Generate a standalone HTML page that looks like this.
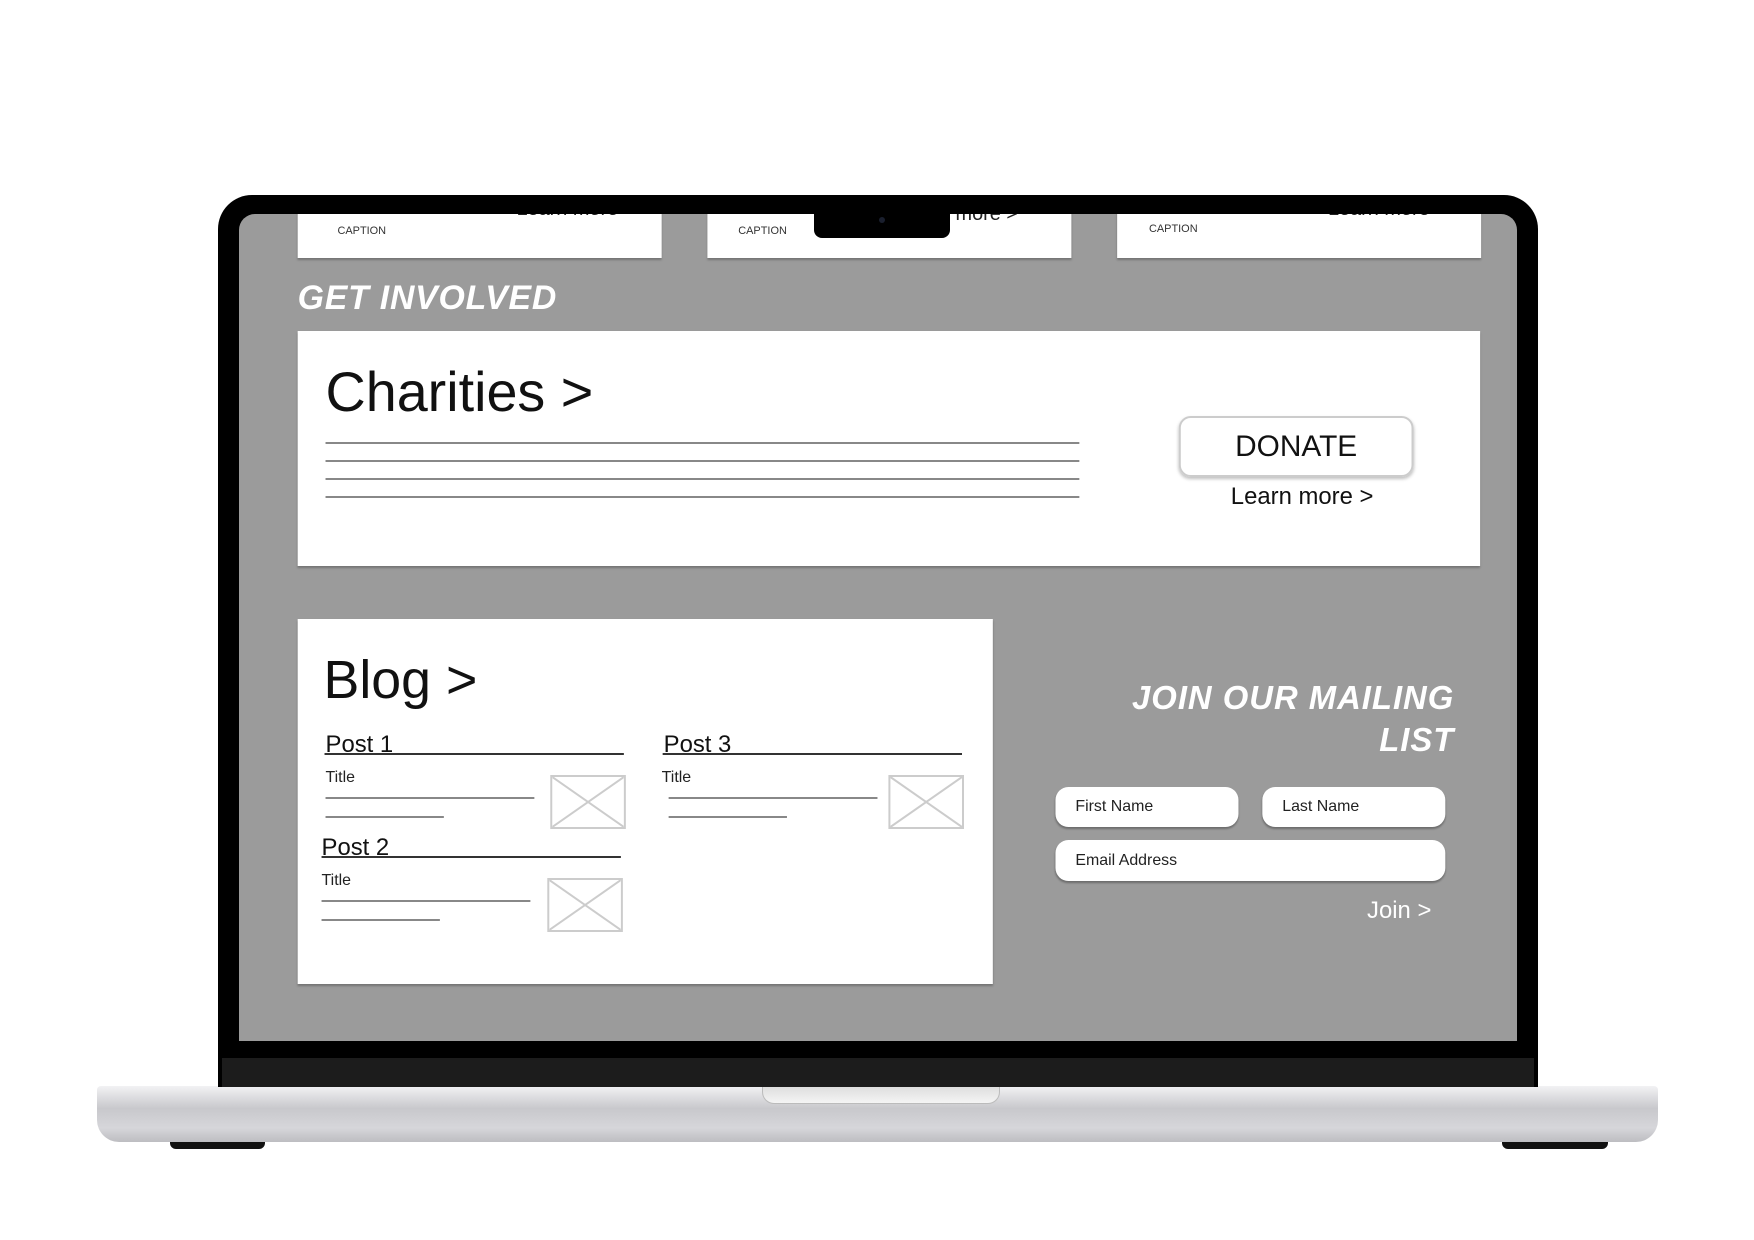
<!DOCTYPE html>
<html><head><meta charset="utf-8"><style>
*{margin:0;padding:0;box-sizing:border-box}
body{width:1754px;height:1240px;background:#fff;position:relative;overflow:hidden;font-family:"Liberation Sans",sans-serif}
.a{position:absolute}
.card{position:absolute;background:#fff;box-shadow:0 2px 2px rgba(0,0,0,.25)}
.ln{position:absolute;height:2px;background:#888}
.dk{position:absolute;height:2px;background:#333}
.img{position:absolute;border:2px solid #ccc;overflow:hidden}
.inp{position:absolute;background:#fff;border-radius:13px;font-size:16px;color:#222;padding-left:20px;display:flex;align-items:center;box-shadow:0 2px 2px rgba(0,0,0,.3)}
</style></head><body>
<!-- base -->
<div class="a" style="left:170px;top:1135px;width:95px;height:14px;background:#111;border-radius:0 0 6px 6px"></div>
<div class="a" style="left:1502px;top:1135px;width:106px;height:14px;background:#111;border-radius:0 0 6px 6px"></div>
<div class="a" style="left:97px;top:1086px;width:1561px;height:56px;border-radius:4px 4px 22px 22px;background:linear-gradient(#f2f2f4,#c8c8cc 40%,#d6d6da 75%,#bdbdc1)"></div>
<div class="a" style="left:762px;top:1086px;width:238px;height:18px;border-radius:0 0 12px 12px;background:linear-gradient(#ddd,#f4f4f4);border:1px solid #bbb;border-top:none"></div>
<!-- bezel -->
<div class="a" style="left:218px;top:195px;height:892px;background:#000;border-radius:34px 34px 0 0;width:1320px"></div>
<div class="a" style="left:222px;top:1058px;width:1312px;height:29px;background:#1c1c1c"></div>
<!-- screen -->
<div class="a" style="left:239px;top:214px;width:1278px;height:827px;background:#9b9b9b;border-radius:16px 16px 0 0"></div>
<div class="a" style="left:239px;top:214px;width:1278px;height:827px;overflow:hidden">
<div class="a" style="left:0;top:-3px;width:1285px;height:832px;transform:scaleX(0.9945);transform-origin:0 0">
 <div class="card" style="left:59px;top:-17px;width:366px;height:64px"><div class="a" style="left:40px;top:31px;font-size:11px;color:#333">CAPTION</div><div class="a" style="left:220px;top:4px;font-size:20px;color:#222">Learn more &gt;</div></div>
 <div class="card" style="left:471px;top:-17px;width:366px;height:64px"><div class="a" style="left:31px;top:31px;font-size:11px;color:#333">CAPTION</div><div class="a" style="left:215px;top:9px;font-size:20px;color:#222">arn more &gt;</div></div>
 <div class="card" style="left:883px;top:-17px;width:366px;height:64px"><div class="a" style="left:32px;top:29px;font-size:11px;color:#333">CAPTION</div><div class="a" style="left:212px;top:4px;font-size:20px;color:#222">Learn more &gt;</div></div>
 <div class="a" style="left:59px;top:68px;font-size:34px;font-weight:bold;font-style:italic;color:#fff;letter-spacing:0.8px">GET INVOLVED</div>
 <!-- charities -->
 <div class="card" style="left:59px;top:120px;width:1189px;height:235px">
  <div class="a" style="left:28px;top:28px;font-size:56px;color:#111">Charities &gt;</div>
  <div class="ln" style="left:28px;top:111px;width:758px"></div>
  <div class="ln" style="left:28px;top:129px;width:758px"></div>
  <div class="ln" style="left:28px;top:147px;width:758px"></div>
  <div class="ln" style="left:28px;top:165px;width:758px"></div>
  <div class="a" style="left:886px;top:85px;width:236px;height:61px;border:2px solid #ccc;border-radius:12px;box-shadow:0 2px 3px rgba(0,0,0,.25);display:flex;align-items:center;justify-content:center;font-size:30px;color:#111">DONATE</div>
  <div class="a" style="left:880px;top:152px;width:260px;text-align:center;font-size:24px;color:#111">Learn more &gt;</div>
 </div>
 <!-- blog -->
 <div class="card" style="left:59px;top:408px;width:699px;height:365px">
  <div class="a" style="left:26px;top:30px;font-size:54px;color:#111">Blog &gt;</div>
  <div class="a" style="left:28px;top:112px;font-size:24px;color:#111">Post 1</div>
  <div class="dk" style="left:27px;top:134px;width:301px"></div>
  <div class="a" style="left:28px;top:150px;font-size:16px;color:#222">Title</div>
  <div class="ln" style="left:28px;top:178px;width:210px"></div>
  <div class="ln" style="left:28px;top:197px;width:119px"></div>
  <div class="img" style="left:254px;top:156px;width:76px;height:54px"><svg width="72" height="50"><path d="M0 0L72 50M72 0L0 50" stroke="#ccc" stroke-width="2"/></svg></div>
  <div class="a" style="left:24px;top:215px;font-size:24px;color:#111">Post 2</div>
  <div class="dk" style="left:24px;top:237px;width:301px"></div>
  <div class="a" style="left:24px;top:253px;font-size:16px;color:#222">Title</div>
  <div class="ln" style="left:24px;top:281px;width:210px"></div>
  <div class="ln" style="left:24px;top:300px;width:119px"></div>
  <div class="img" style="left:251px;top:259px;width:76px;height:54px"><svg width="72" height="50"><path d="M0 0L72 50M72 0L0 50" stroke="#ccc" stroke-width="2"/></svg></div>
  <div class="a" style="left:368px;top:112px;font-size:24px;color:#111">Post 3</div>
  <div class="dk" style="left:367px;top:134px;width:301px"></div>
  <div class="a" style="left:366px;top:150px;font-size:16px;color:#222">Title</div>
  <div class="ln" style="left:373px;top:178px;width:210px"></div>
  <div class="ln" style="left:373px;top:197px;width:119px"></div>
  <div class="img" style="left:594px;top:156px;width:76px;height:54px"><svg width="72" height="50"><path d="M0 0L72 50M72 0L0 50" stroke="#ccc" stroke-width="2"/></svg></div>
 </div>
 <!-- mailing -->
 <div class="a" style="left:766px;top:466px;width:456px;text-align:right;font-size:33px;line-height:42px;font-weight:bold;font-style:italic;color:#fff;letter-spacing:1px">JOIN OUR MAILING<br>LIST</div>
 <div class="inp" style="left:821px;top:576px;width:184px;height:40px">First Name</div>
 <div class="inp" style="left:1029px;top:576px;width:184px;height:40px">Last Name</div>
 <div class="inp" style="left:821px;top:629px;width:392px;height:41px">Email Address</div>
 <div class="a" style="left:1098px;top:686px;width:101px;text-align:right;font-size:24px;color:#fff">Join &gt;</div>
</div>
</div>
<!-- notch -->
<div class="a" style="left:814px;top:212px;width:136px;height:26px;background:#000;border-radius:0 0 8px 8px"></div>
<div class="a" style="left:879px;top:217px;width:6px;height:6px;background:#1a1f2e;border-radius:50%"></div>
</body></html>
